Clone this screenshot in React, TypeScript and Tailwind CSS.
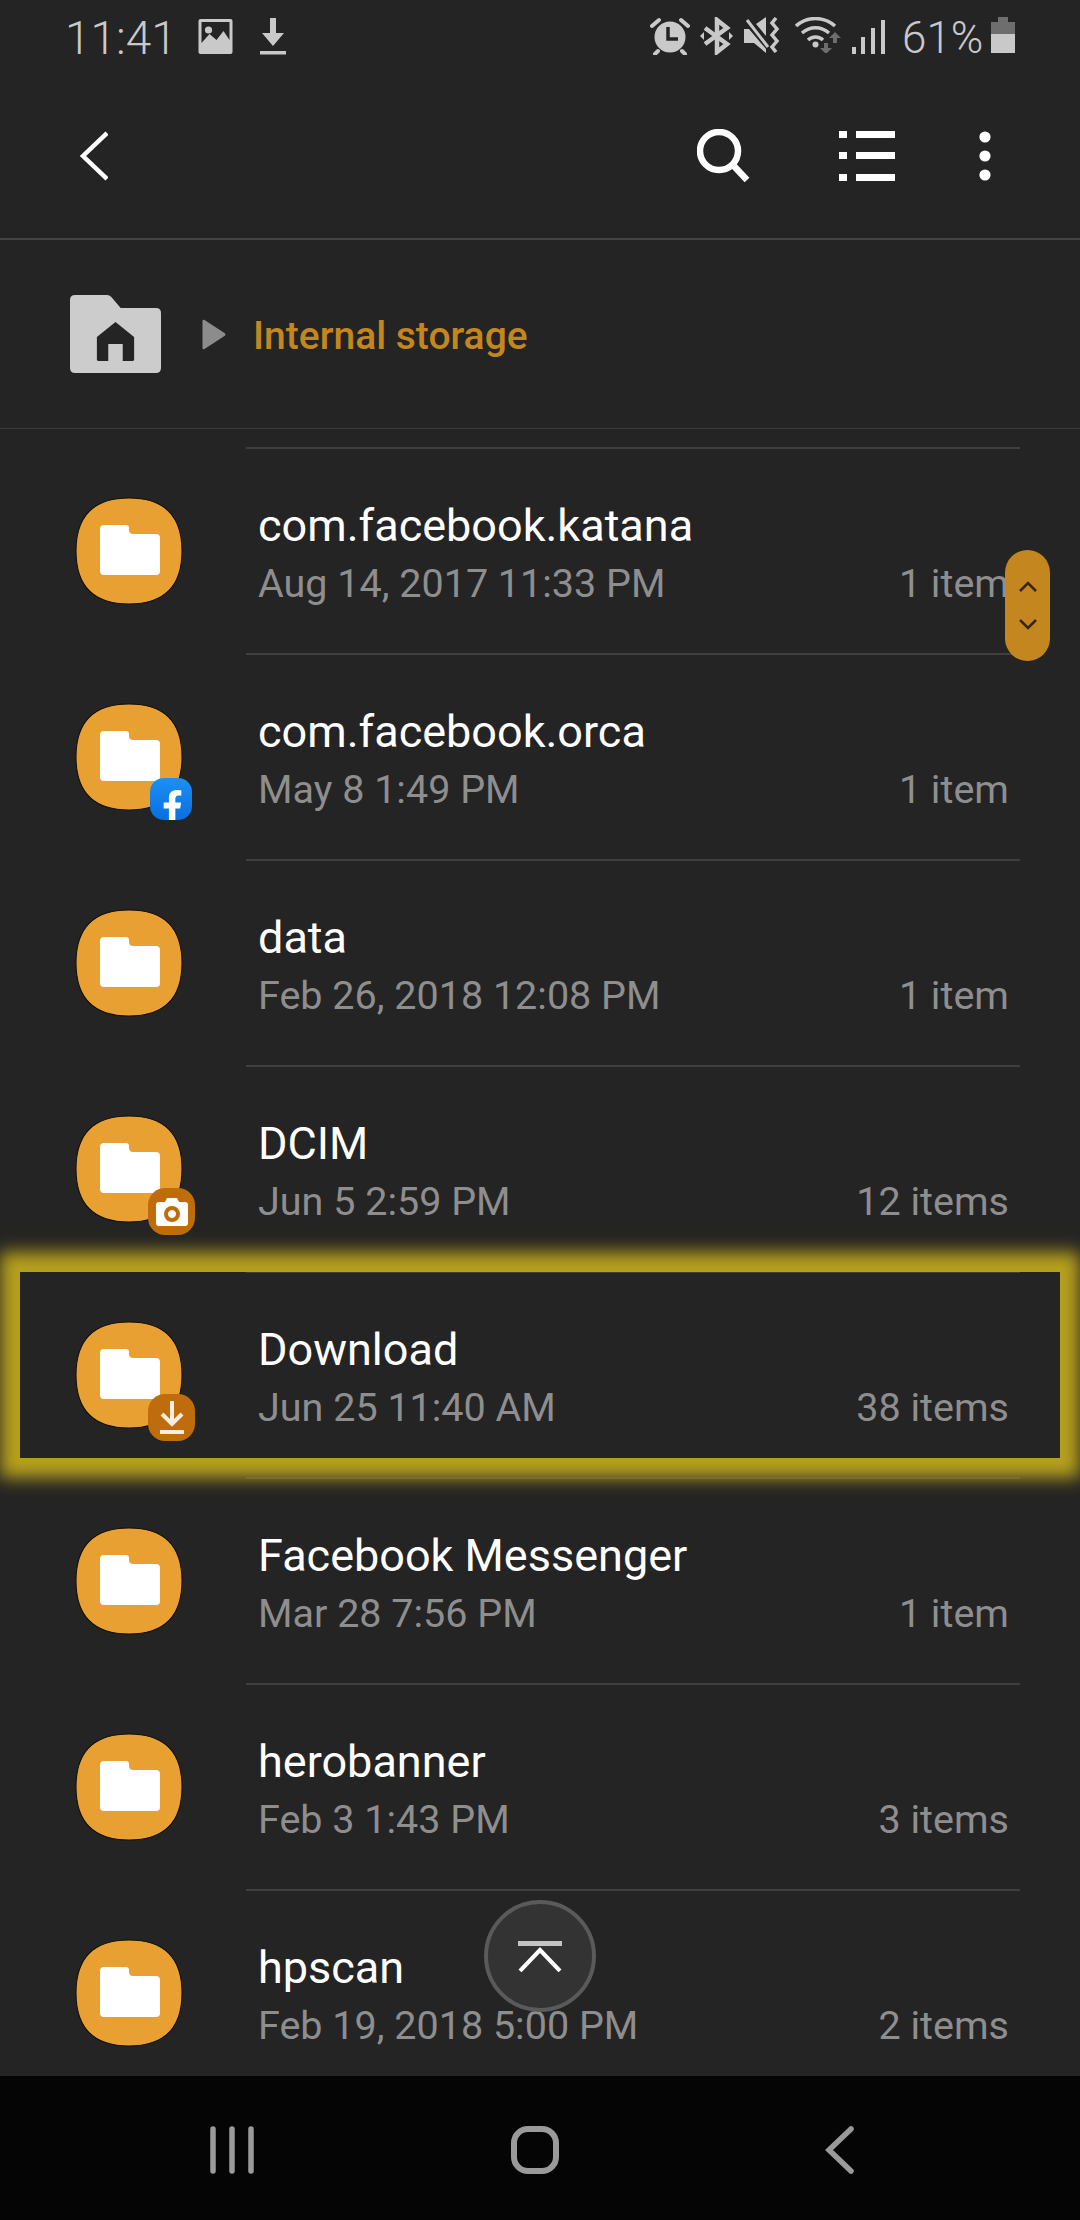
import { FaFacebookF } from "react-icons/fa";

const folders = [
  { name: "com.facebook.katana", date: "Aug 14, 2017 11:33 PM", count: "1 item" },
  { name: "com.facebook.orca", date: "May 8 1:49 PM", count: "1 item", badge: "facebook" },
  { name: "data", date: "Feb 26, 2018 12:08 PM", count: "1 item" },
  { name: "DCIM", date: "Jun 5 2:59 PM", count: "12 items", badge: "camera" },
  { name: "Download", date: "Jun 25 11:40 AM", count: "38 items", badge: "download" },
  { name: "Facebook Messenger", date: "Mar 28 7:56 PM", count: "1 item" },
  { name: "herobanner", date: "Feb 3 1:43 PM", count: "3 items" },
  { name: "hpscan", date: "Feb 19, 2018 5:00 PM", count: "2 items" },
];

const squircle = "M50 0C83 0 100 17 100 50C100 83 83 100 50 100C17 100 0 83 0 50C0 17 17 0 50 0Z";

function StatusBar() {
  return (
    <div className="flex h-[76px] shrink-0 items-start pt-[17px] pl-[65px] text-[#c9c9c9]">
      <span className="w-[133px] text-[46px] leading-[42px] font-light">11:41</span>
      {/* gallery notification */}
      <svg className="mt-[2px]" width="35" height="35" viewBox="0 0 34 35">
        <path fill="currentColor" fillRule="evenodd" d="M2 0H32Q34 0 34 2V33Q34 35 32 35H2Q0 35 0 33V2Q0 0 2 0ZM3 3V24L11 15L18 21L25 12L31 21V3Z" />
        <circle cx="10" cy="11" r="3.6" fill="currentColor" />
      </svg>
      {/* download notification */}
      <svg className="mt-[1px] ml-[26px]" width="28" height="38" viewBox="0 0 28 38">
        <path fill="currentColor" d="M11 0H17V15H25L14 28L3 15H11Z" />
        <rect x="1" y="33" width="26" height="3.5" fill="currentColor" />
      </svg>
      <div className="flex-1" />
      {/* alarm */}
      <svg width="40" height="38" viewBox="0 0 40 38">
        <path stroke="currentColor" strokeWidth="4" strokeLinecap="round" d="M2 9L9 3M38 9L31 3M8 34L5 37M32 34L35 37" />
        <circle cx="20" cy="20" r="15.5" fill="currentColor" />
        <path d="M18 10V22H28" stroke="#242424" strokeWidth="3.5" fill="none" />
      </svg>
      {/* bluetooth */}
      <svg className="ml-[10px]" width="33" height="38" viewBox="0 0 33 38">
        <path d="M5 11L27 27L17 35V3L27 11L5 27" stroke="currentColor" strokeWidth="4.5" fill="none" />
        <path d="M0 19L4 15V23ZM33 19L29 15V23Z" fill="currentColor" />
      </svg>
      {/* mute + vibrate */}
      <svg className="ml-[11px]" width="37" height="36" viewBox="0 0 37 36">
        <path fill="currentColor" d="M0 12H5L22 32V36L10 26H0ZM12 7L22 0V19Z" />
        <path stroke="currentColor" strokeWidth="3" d="M3 3L24 30" />
        <path stroke="currentColor" strokeWidth="3.5" fill="none" d="M32 1L28 6L33 12L28 18L33 24L28 30L32 35" />
      </svg>
      {/* wifi with data arrows */}
      <svg className="ml-[14px]" width="48" height="36" viewBox="0 0 48 36">
        <path stroke="currentColor" strokeWidth="3.4" fill="none" d="M1 9C12 -1 29 -1 40 9M7 16C15 9 26 9 34 16M13 23C17 19 24 19 28 23" />
        <circle cx="20.500" cy="27.500" r="3" fill="currentColor" />
        <path fill="#6d6d6d" d="M29 26H33V31H37L31 37L25 31H29ZM38 26H42V21H46L40 15L34 21H38Z" />
      </svg>
      {/* signal */}
      <svg className="ml-[9px] mt-[3px]" width="33" height="34" viewBox="0 0 33 34">
        <path fill="currentColor" d="M0 27H4V34H0ZM9 17H13V34H9ZM19 8H23V34H19ZM29 0H33V34H29Z" />
      </svg>
      <span className="ml-[17px] w-[89px] text-[44px] leading-[42px] font-light">61%</span>
      {/* battery */}
      <svg width="24" height="36" viewBox="0 0 24 36">
        <path fill="#6e6e6e" d="M7 0H17V5H24V17H0V5H7Z" />
        <rect y="17" width="24" height="19" fill="currentColor" />
      </svg>
      <div className="w-[65px]" />
    </div>
  );
}

function Toolbar() {
  return (
    <div className="flex h-[164px] shrink-0 items-center border-b-2 border-[#444444] pb-[2px] text-white">
      <svg className="ml-[78px]" width="30" height="50" viewBox="0 0 30 50">
        <path d="M29 2L5 25L29 48" fill="none" stroke="currentColor" strokeWidth="4.5" />
      </svg>
      <div className="flex-1" />
      <svg width="54" height="54" viewBox="0 0 54 54">
        <circle cx="22" cy="22" r="19" fill="none" stroke="currentColor" strokeWidth="6.5" />
        <path d="M35 35L50 51" stroke="currentColor" strokeWidth="6.5" />
      </svg>
      <svg className="ml-[88px]" width="56" height="50" viewBox="0 0 56 50">
        <path fill="currentColor" d="M0 0H8V7H0ZM17 0H56V7H17ZM0 21H8V28H0ZM17 21H56V28H17ZM0 43H8V50H0ZM17 43H56V50H17Z" />
      </svg>
      <svg className="mr-[89px] ml-[84px]" width="12" height="50" viewBox="0 0 12 50">
        <circle cx="6" cy="6" r="5.600" fill="currentColor" />
        <circle cx="6" cy="25" r="5.600" fill="currentColor" />
        <circle cx="6" cy="44" r="5.600" fill="currentColor" />
      </svg>
    </div>
  );
}

function Breadcrumb() {
  return (
    <div className="flex h-[189px] shrink-0 items-center border-b border-[#3b3b3b] pl-[70px]">
      <svg width="91" height="78" viewBox="0 0 88 78" preserveAspectRatio="none">
        <path fill="#cccccc" d="M5 0H36Q38 0 40 2L49 13H83Q88 13 88 18V73Q88 78 83 78H5Q0 78 0 73V5Q0 0 5 0Z" />
        <path fill="#242424" d="M44 27L62 42V65Q62 66 60 66H51V49H37V66H28Q26 66 26 65V42Z" />
      </svg>
      <svg className="ml-[41px]" width="24" height="31" viewBox="0 0 23 31">
        <path fill="#8c8c8c" d="M0 2Q0 0 2 1L22 14Q24 15.500 22 17L2 30Q0 31 0 29Z" />
      </svg>
      <span className="mt-[5px] ml-[27px] text-[39px] font-medium text-[#c4861f]">Internal storage</span>
    </div>
  );
}

function FolderIcon({ badge }: { badge?: string }) {
  return (
    <div className="relative h-[106px] w-[106px]">
      <svg width="106" height="106" viewBox="0 0 100 100" overflow="visible">
        <path d={squircle} fill="#e8a032" stroke="#15100a" strokeWidth="1" />
      </svg>
      <svg className="absolute top-[27px] left-[24px]" width="60" height="50" viewBox="0 0 60 50">
        <path fill="#ffffff" d="M4 0H26Q29 0 29 3V5Q29 9 33 9H56Q60 9 60 13V46Q60 50 56 50H4Q0 50 0 46V4Q0 0 4 0Z" />
      </svg>
      {badge === "facebook" && (
        <div className="absolute top-[74px] left-[74px] flex h-[42px] w-[42px] items-end justify-center overflow-hidden rounded-[14px] bg-linear-to-b from-[#1c90f6] to-[#0a6ee0] text-white">
          <FaFacebookF className="ml-[2px] translate-y-[3px] text-[33px]" />
        </div>
      )}
      {badge === "camera" && (
        <div className="absolute top-[72px] left-[72px] flex h-[47px] w-[47px] items-center justify-center rounded-[17px] bg-[#bf6d0c]">
          <svg width="32" height="28" viewBox="0 0 32 28">
            <path fill="#ffffff" fillRule="evenodd" d="M3 4H9L11 0H21L23 4H29Q32 4 32 7V25Q32 28 29 28H3Q0 28 0 25V7Q0 4 3 4ZM16 8A8 8 0 1 0 16.010 8ZM16 12A4 4 0 1 1 15.990 12Z" />
          </svg>
        </div>
      )}
      {badge === "download" && (
        <div className="absolute top-[72px] left-[72px] flex h-[47px] w-[47px] items-center justify-center rounded-[17px] bg-[#bf6d0c]">
          <svg width="24" height="33" viewBox="0 0 24 33">
            <path d="M12 0V22M2 13L12 23L22 13" fill="none" stroke="#fbeee0" strokeWidth="4" />
            <rect y="29" width="24" height="4" fill="#fbeee0" />
          </svg>
        </div>
      )}
    </div>
  );
}

function FolderRow({ item }: { item: (typeof folders)[number] }) {
  return (
    <div className="flex h-[206px] shrink-0">
      <div className="w-[246px] shrink-0 pt-[51px] pl-[76px]">
        <FolderIcon badge={item.badge} />
      </div>
      <div className="mr-[60px] flex flex-1 flex-col border-t-2 border-[#3f3f3f] pt-[51px] pr-[11px] pl-[12px]">
        <div className="text-[45px] leading-[52px] text-white">{item.name}</div>
        <div className="mt-[9px] flex justify-between text-[39.5px] leading-[46px] text-[#8e8e8e]">
          <span>{item.date}</span>
          <span>{item.count}</span>
        </div>
      </div>
    </div>
  );
}

export default function App() {
  return (
    <div className="relative flex h-[2220px] w-[1080px] flex-col overflow-hidden bg-[#242424] font-['Roboto',sans-serif]">
      <StatusBar />
      <Toolbar />
      <Breadcrumb />
      <div className="flex min-h-0 flex-1 flex-col overflow-hidden pt-[18px]">
        {folders.map((item) => (
          <FolderRow key={item.name} item={item} />
        ))}
      </div>
      <div className="flex h-[144px] shrink-0 items-center bg-[#050505] pt-[4px]">
        <svg className="ml-[210px]" width="44" height="48" viewBox="0 0 44 48">
          <path d="M3 3V45M22 3V45M41 3V45" stroke="#9a9a9a" strokeWidth="5.500" strokeLinecap="round" />
        </svg>
        <svg className="ml-[257px]" width="48" height="48" viewBox="0 0 48 48">
          <rect x="3" y="3" width="42" height="42" rx="14" fill="none" stroke="#9a9a9a" strokeWidth="6" />
        </svg>
        <svg className="ml-[265px]" width="30" height="48" viewBox="0 0 30 48">
          <path d="M27 3L5 24L27 45" fill="none" stroke="#9a9a9a" strokeWidth="5.500" strokeLinecap="round" />
        </svg>
      </div>

      {/* focus highlight over the Download row */}
      <div className="pointer-events-none absolute top-[1272px] left-[20px] h-[186px] w-[1040px] shadow-[0_0_16px_20px_#b5a01e]" />

      {/* fast scroll handle */}
      <div className="absolute top-[550px] left-[1005px] flex h-[111px] w-[45px] flex-col items-center justify-center gap-[25px] rounded-full bg-[#c4861f]">
        <svg width="20" height="12" viewBox="0 0 20 12">
          <path d="M2 10L10 2L18 10" fill="none" stroke="#3a2408" strokeWidth="2.500" />
        </svg>
        <svg width="20" height="12" viewBox="0 0 20 12">
          <path d="M2 2L10 10L18 2" fill="none" stroke="#3a2408" strokeWidth="2.500" />
        </svg>
      </div>

      {/* scroll to top */}
      <div className="absolute top-[1900px] left-[484px] flex h-[112px] w-[112px] items-center justify-center rounded-full border-4 border-[#5a5a5a] bg-[#333333]">
        <svg width="44" height="31" viewBox="0 0 44 31">
          <rect width="44" height="5" fill="#c4c4c4" />
          <path d="M2 30L22 9L42 30" fill="none" stroke="#ffffff" strokeWidth="4" />
        </svg>
      </div>
    </div>
  );
}
